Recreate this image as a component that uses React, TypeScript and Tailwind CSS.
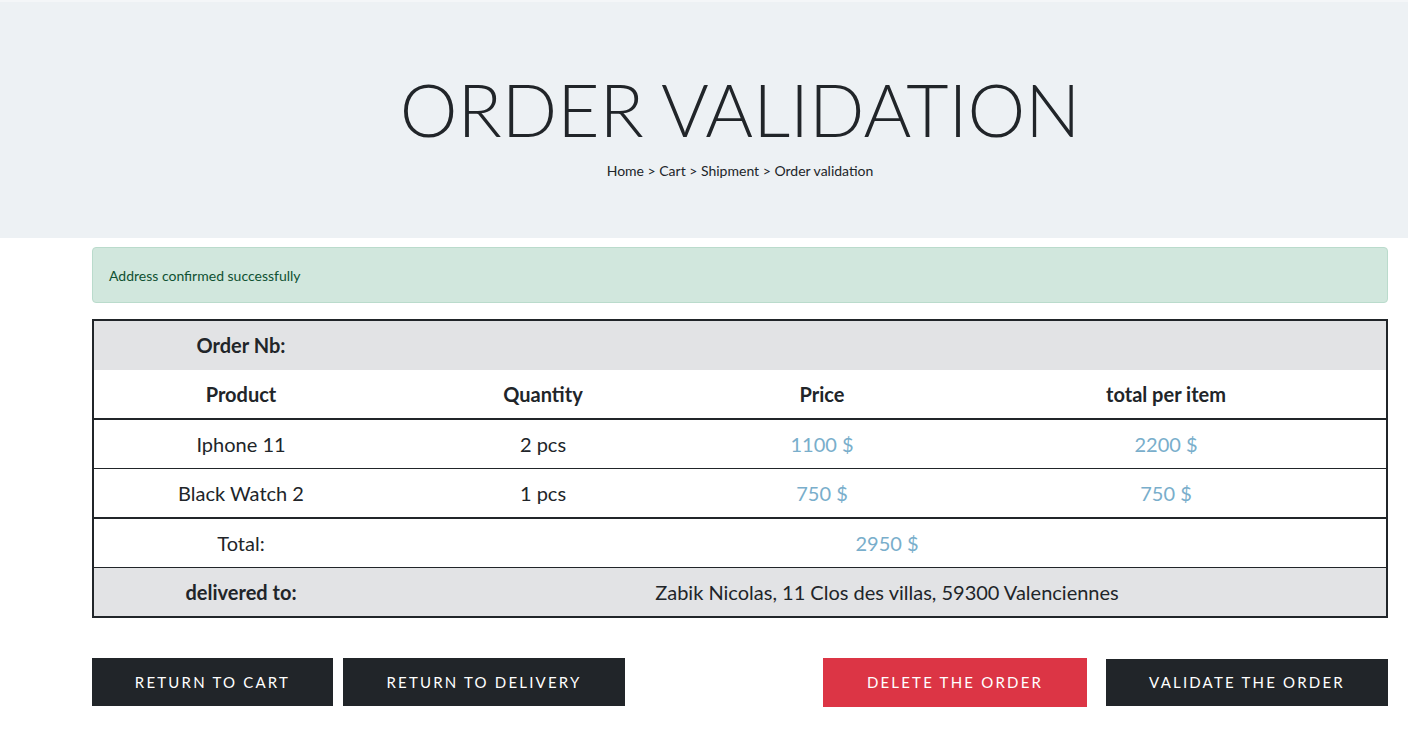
import React from 'react';

const items = [
  { name: 'Iphone 11', qty: '2 pcs', price: '1100 $', total: '2200 $' },
  { name: 'Black Watch 2', qty: '1 pcs', price: '750 $', total: '750 $' },
];

export default function App() {
  return (
    <div className="min-h-screen bg-white text-[#212529] font-['Lato','Noto_Sans',sans-serif]">
      {/* Header */}
      <div className="h-[2px] bg-[#f4f6f8]" />
      <header className="bg-[#edf1f4] h-[236px] flex flex-col items-center pl-[72px] pt-[71px]">
        <h1 className="text-[73px] font-light leading-none">ORDER VALIDATION</h1>
        <p className="text-[14px] mt-[14px]">Home &gt; Cart &gt; Shipment &gt; Order validation</p>
      </header>

      <main className="ml-[92px] w-[1296px] pt-[9px]">
        {/* Alert */}
        <div className="h-[56px] flex items-center px-[16px] rounded-[4px] border border-[#badbcc] bg-[#d1e7dd] text-[#0f5132] text-[14px]">
          Address confirmed successfully
        </div>

        {/* Table */}
        <table className="mt-[16px] w-full border-2 border-[#212529] border-collapse text-[20px] text-center">
          <colgroup>
            <col className="w-[295px]" />
            <col className="w-[310px]" />
            <col className="w-[248px]" />
            <col />
          </colgroup>
          <tbody>
            <tr className="bg-[#e2e3e5] h-[49.5px]">
              <th className="font-bold">Order Nb:</th>
              <td colSpan={3}></td>
            </tr>
            <tr className="h-[49.5px] border-b-2 border-[#212529]">
              <th className="font-bold">Product</th>
              <th className="font-bold">Quantity</th>
              <th className="font-bold">Price</th>
              <th className="font-bold">total per item</th>
            </tr>
            {items.map((item, i) => (
              <tr
                key={item.name}
                className={
                  i === items.length - 1
                    ? 'h-[49.5px] border-b-2 border-[#212529]'
                    : 'h-[49.5px] border-b border-[#212529]'
                }
              >
                <td>{item.name}</td>
                <td>{item.qty}</td>
                <td className="text-[#79aecb]">{item.price}</td>
                <td className="text-[#79aecb]">{item.total}</td>
              </tr>
            ))}
            <tr className="h-[49.5px] border-b border-[#212529]">
              <td>Total:</td>
              <td colSpan={3} className="text-[#79aecb]">2950 $</td>
            </tr>
            <tr className="bg-[#e2e3e5] h-[49.5px]">
              <th className="font-bold">delivered to:</th>
              <td colSpan={3}>Zabik Nicolas, 11 Clos des villas, 59300 Valenciennes</td>
            </tr>
          </tbody>
        </table>

        {/* Actions */}
        <div className="mt-[40px] flex justify-between items-start text-[15px] tracking-[2.2px] text-white">
          <div className="flex gap-[10px]">
            <button className="w-[241px] h-[48px] bg-[#212529]">RETURN TO CART</button>
            <button className="w-[282px] h-[48px] bg-[#212529]">RETURN TO DELIVERY</button>
          </div>
          <div className="flex gap-[19px] items-start">
            <button className="w-[264px] h-[49px] bg-[#dc3545]">DELETE THE ORDER</button>
            <button className="w-[282px] h-[47px] mt-[1px] bg-[#212529]">VALIDATE THE ORDER</button>
          </div>
        </div>
      </main>
    </div>
  );
}
